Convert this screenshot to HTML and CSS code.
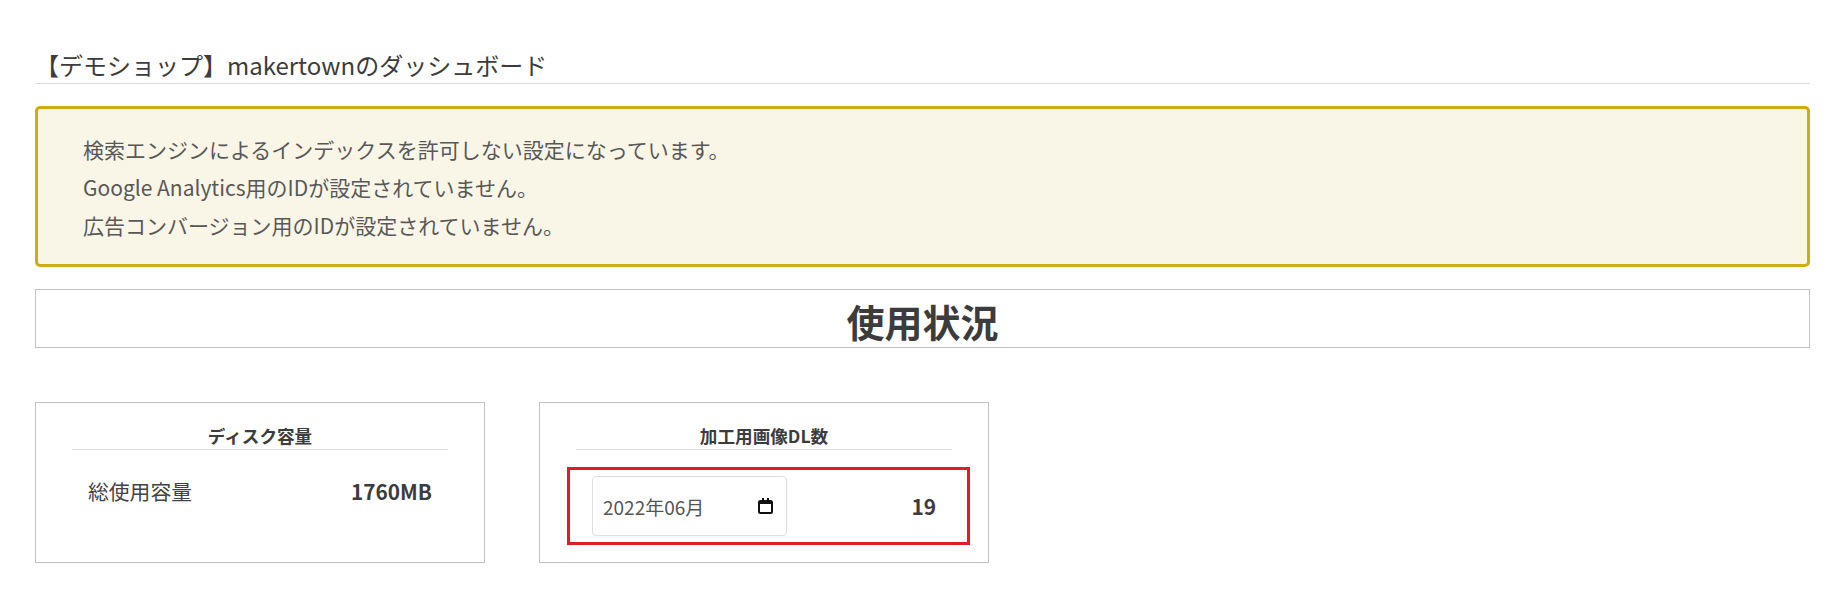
FILE: index.html
```html
<!DOCTYPE html>
<html lang="ja">
  <head>
    <meta charset="utf-8" />
    <title>ダッシュボード</title>
    <link rel="stylesheet" href="styles.css">
  </head>

  <body>
    <div class="dashboard">
      <h1 class="page-title">【デモショップ】makertownのダッシュボード</h1>

      <div class="notice">
        <p>検索エンジンによるインデックスを許可しない設定になっています。</p>
        <p>Google Analytics用のIDが設定されていません。</p>
        <p>広告コンバージョン用のIDが設定されていません。</p>
      </div>

      <h2 class="section-title">使用状況</h2>

      <div class="cards">
        <div class="card">
          <div class="card-title">ディスク容量</div>
          <div class="card-row">
            <span class="row-label">総使用容量</span>
            <span class="row-value">1760MB</span>
          </div>
        </div>

        <div class="card">
          <div class="card-title">加工用画像DL数</div>
          <div class="card-row card-row-center">
            <div class="month-input">
              <span class="month-text">2022年06月</span>
              <svg class="calendar-icon" width="15" height="16" viewBox="0 0 15 16">
                <path d="M4 0h2v2h3V0h2v2h1.5A2.5 2.5 0 0 1 15 4.5v9A2.5 2.5 0 0 1 12.5 16h-10A2.5 2.5 0 0 1 0 13.5v-9A2.5 2.5 0 0 1 2.5 2H4V0zM2 6v7.5a.5.5 0 0 0 .5.5h10a.5.5 0 0 0 .5-.5V6H2z" fill="#111"/>
              </svg>
            </div>
            <span class="row-value">19</span>
            <span class="highlight"></span>
          </div>
        </div>
      </div>
    </div>
  </body>
</html>
```

FILE: styles.css
```css
body {
  margin: 0;
  background-color: #fff;
  font-family: "Noto Sans CJK JP", "Noto Sans", sans-serif;
  color: #444;
}

.dashboard {
  width: 1775px;
  margin-left: 35px;
  padding-top: 47px;
}

.page-title {
  margin: 0;
  font-size: 24px;
  font-weight: normal;
  line-height: 36px;
  color: #3c3c3c;
  border-bottom: 1px solid #dcdcdc;
}

.notice {
  margin-top: 22px;
  padding: 21px 45px 20px;
  border: 3px solid #cfac14;
  border-radius: 5px;
  background-color: #f9f6e7;
}

.notice p {
  margin: 0;
  font-size: 21px;
  line-height: 38px;
  color: #585858;
}

.section-title {
  margin: 22px 0 0;
  padding: 7px 0 2px;
  border: 1px solid #c2c2c2;
  font-size: 38px;
  font-weight: bold;
  line-height: 48px;
  text-align: center;
  color: #3c3c3c;
}

.cards {
  display: flex;
  gap: 54px;
  margin-top: 54px;
}

.card {
  width: 450px;
  box-sizing: border-box;
  padding: 20px 36px 26px;
  border: 1px solid #c2c2c2;
}

.card-title {
  font-size: 17.6px;
  font-weight: bold;
  line-height: 26px;
  text-align: center;
  color: #3c3c3c;
  border-bottom: 1px solid #dcdcdc;
}

.card-row {
  position: relative;
  display: flex;
  justify-content: space-between;
  align-items: flex-start;
  margin-top: 26px;
  padding: 0 16px;
}

.card-row-center {
  align-items: center;
}

.row-label {
  font-size: 20.8px;
  line-height: 30px;
  color: #444;
}

.row-value {
  font-size: 20.8px;
  font-weight: bold;
  line-height: 30px;
  color: #3c3c3c;
}

.month-input {
  display: flex;
  align-items: center;
  justify-content: space-between;
  width: 195px;
  height: 60px;
  box-sizing: border-box;
  padding: 0 13px 0 10px;
  border: 1px solid #dedede;
  border-radius: 4px;
  background-color: #fff;
}

.month-text {
  font-size: 19px;
  color: #555;
}

.calendar-icon {
  display: block;
}

/* red outline drawn around the download row */
.highlight {
  position: absolute;
  top: -9px;
  bottom: -9px;
  left: -9px;
  right: -18px;
  border: 3px solid #e41b24;
  pointer-events: none;
}
```
